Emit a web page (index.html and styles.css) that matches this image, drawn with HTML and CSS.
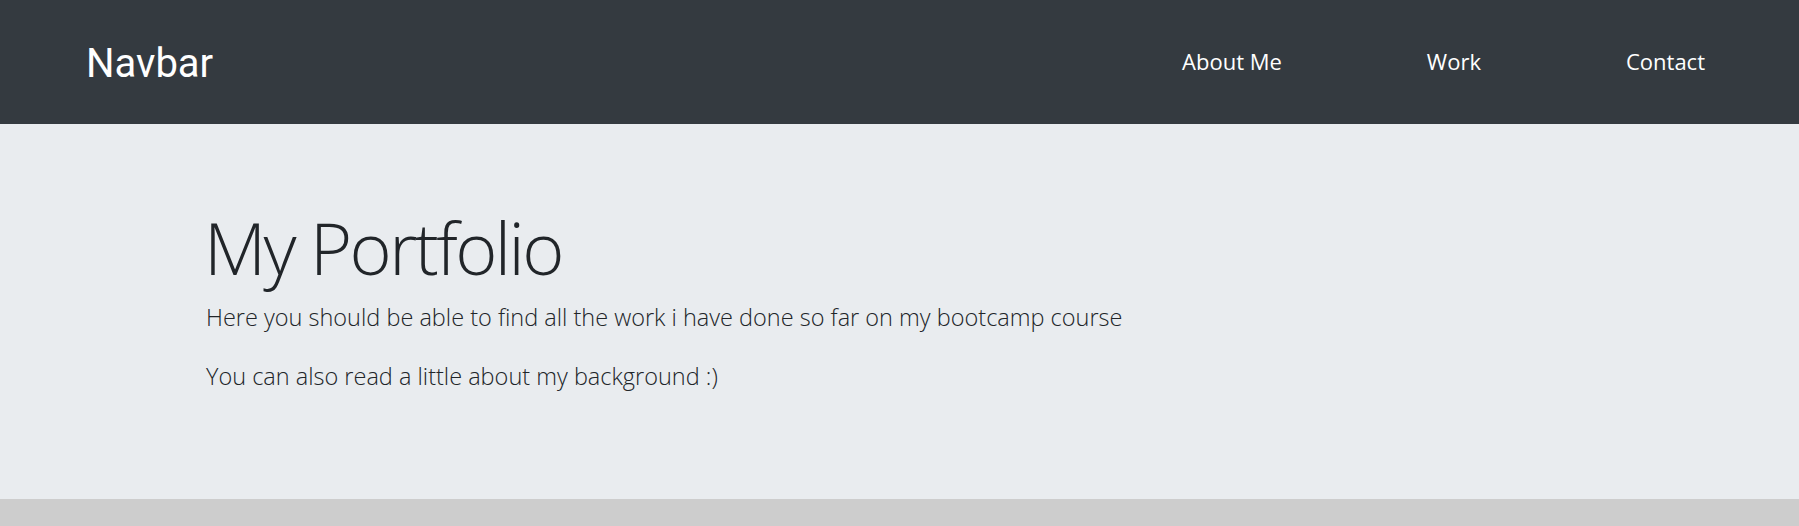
FILE: index.html
```html
<!DOCTYPE html>
<html lang="en">
<head>
<meta charset="utf-8">
<title>My Portfolio</title>
<link rel="stylesheet" href="styles.css">
</head>
<body>
  <nav class="navbar">
    <a class="brand" href="#">Navbar</a>
    <ul class="nav-links">
      <li><a href="#">About Me</a></li>
      <li><a href="#">Work</a></li>
      <li><a href="#">Contact</a></li>
    </ul>
  </nav>
  <header class="jumbotron">
    <div class="jumbo-inner">
      <h1 class="display">My Portfolio</h1>
      <p class="lead">Here you should be able to find all the work i have done so far on my bootcamp course</p>
      <p class="lead last">You can also read a little about my background :)</p>
    </div>
  </header>
</body>
</html>
```
FILE: styles.css
```css
* { box-sizing: border-box; }

html, body {
  margin: 0;
  padding: 0;
}

body {
  background: #cdcdcd;
  color: #212529;
  font-family: "Open Sans", "Noto Sans", sans-serif;
}

.navbar {
  display: flex;
  justify-content: space-between;
  align-items: flex-start;
  height: 124px;
  padding: 40px 94px 0 86px;
  background: #343a40;
}

.brand {
  font-family: Roboto, "Open Sans", sans-serif;
  font-weight: 400;
  font-size: 40px;
  line-height: 48px;
  color: #ffffff;
  text-decoration: none;
}

.nav-links {
  display: flex;
  gap: 145px;
  list-style: none;
  margin: 0;
  padding: 6px 0 0 0;
}

.nav-links a {
  display: block;
  font-family: "Open Sans", sans-serif;
  font-weight: 400;
  font-size: 22px;
  line-height: 30px;
  color: #ffffff;
  text-decoration: none;
}

.jumbotron {
  background: #e9ecef;
  padding: 80px 0 105px 0;
}

.jumbo-inner {
  padding-left: 206px;
}

.display {
  margin: 0 0 10px 0;
  font-weight: 300;
  font-size: 72px;
  line-height: 86.4px;
  letter-spacing: -2.6px;
  text-indent: -2px;
  color: #212529;
}

.lead {
  margin: 0 0 23px 0;
  font-weight: 300;
  font-size: 23.5px;
  line-height: 35.25px;
  color: #212529;
}

.lead.last {
  margin-bottom: 0;
}
```
